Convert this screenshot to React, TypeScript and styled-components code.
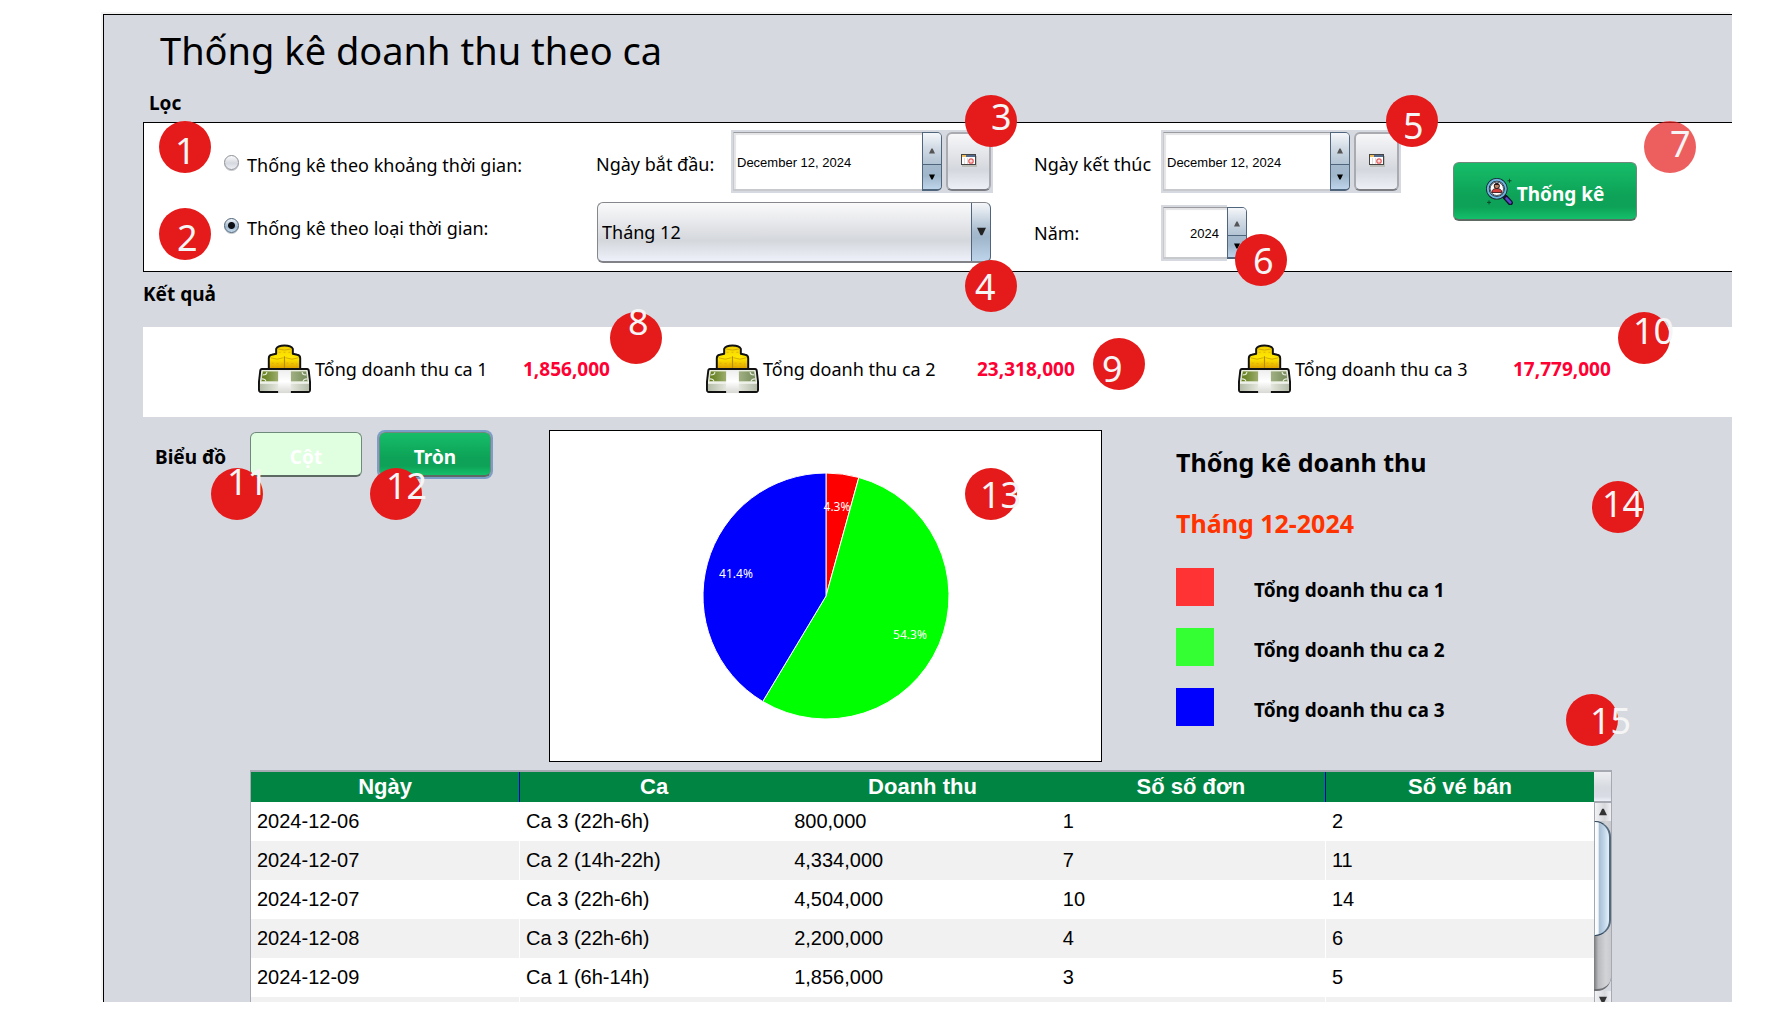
import React, { useState } from "react";
import styled, { createGlobalStyle, css } from "styled-components";

const UI_FONT = `"Noto Sans", "Open Sans", sans-serif`;
const DATA_FONT = `"Liberation Sans", Arial, sans-serif`;
const SURFACE = "#d6d9e0";

const GlobalStyle = createGlobalStyle`
  *, *::before, *::after { box-sizing: border-box; }
  body { margin: 0; background: #fff; color: #000; font: 18px/24px ${UI_FONT}; }
  button, input, select { font: inherit; color: inherit; margin: 0; }
`;

const Page = styled.div`
  position: relative;
  height: 100vh;
  overflow: hidden;
  padding: 14px 35px 26px 103px;
`;

const Frame = styled.main`
  height: 100%;
  display: flex;
  flex-direction: column;
  overflow: hidden;
  padding: 9px 0 0 39px;
  background: ${SURFACE};
  border: solid #000;
  border-width: 1px 0 0 1px;
  box-shadow: -2px -2px 0 #f3f3f3;
`;

const Title = styled.h1`
  margin: 0 0 15px 17px;
  font-size: 38px;
  line-height: 52px;
  font-weight: 400;
`;

const SectionTitle = styled.h2<{ $indent?: number; $after: number }>`
  margin: 0 0 ${(p) => p.$after}px ${(p) => p.$indent ?? 0}px;
  font-size: 19px;
  line-height: 24px;
  font-weight: 700;
`;

/* ---------- filter ---------- */

const FilterPanel = styled.form`
  flex: none;
  display: grid;
  grid-template-columns: 372px 135px 262px 41px 127px 240px 1fr;
  grid-template-rows: 63px 61px;
  row-gap: 9px;
  align-items: center;
  padding: 7px 0 8px 80px;
  margin-bottom: 10px;
  background: #fff;
  border: solid #000;
  border-width: 1px 0 1px 1px;
`;

const RadioGroup = styled.div`
  grid-area: 1 / 1 / 3 / 2;
  align-self: start;
  display: flex;
  flex-direction: column;
  gap: 39px;
  padding-top: 23px;
`;

const RadioLabel = styled.label`
  display: flex;
  gap: 8px;
  white-space: nowrap;
`;

const Radio = styled.input`
  appearance: none;
  flex: none;
  width: 15px;
  height: 15px;
  margin-top: 2px;
  border: 1px solid #8d9096;
  border-radius: 50%;
  background: linear-gradient(#fbfbfc, #d5d8de 55%, #eef0f6);
  box-shadow: 0 1px 0 #c4c6ca;

  &:checked {
    border-color: #4d6277;
    background:
      radial-gradient(circle, #0c0f14 0 3px, transparent 4px),
      linear-gradient(#eef3f8, #a0b6cb 60%, #c4daec);
  }
`;

const FieldLabel = styled.label<{ $row: number; $col: number }>`
  grid-row: ${(p) => p.$row};
  grid-column: ${(p) => p.$col};
  padding-top: ${(p) => (p.$row === 1 ? 4 : 0)}px;
  white-space: nowrap;
`;

const FieldFrame = styled.div<{ $row: number; $col: number; $width?: number }>`
  grid-row: ${(p) => p.$row};
  grid-column: ${(p) => p.$col};
  display: flex;
  width: ${(p) => (p.$width ? `${p.$width}px` : "auto")};
  height: ${(p) => (p.$width ? 56 : 63)}px;
  padding: 2px;
  background: ${(p) =>
    p.$width ? `linear-gradient(90deg, ${SURFACE} 66px, #fff 66px)` : SURFACE};
`;

const TextField = styled.input<{ $right?: boolean }>`
  flex: 1;
  min-width: 0;
  padding: 4px ${(p) => (p.$right ? 8 : 3)}px 0 3px;
  border: 1px solid #c8c9cc;
  border-top: 1px solid #9a9b9e;
  border-right: 0;
  border-bottom-width: 2px;
  border-radius: 0;
  background: #fff;
  box-shadow: inset 2px 2px 1px #e4e4e6;
  font: 13px/16px ${DATA_FONT};
  text-align: ${(p) => (p.$right ? "right" : "left")};
  outline: none;
`;

const Stepper = styled.div`
  width: 20px;
  display: flex;
  flex-direction: column;
  border: 1px solid #4f657c;
  border-bottom-width: 2px;
  border-radius: 0 5px 5px 0;
  overflow: hidden;
`;

const StepButton = styled.button<{ $down?: boolean }>`
  flex: 1;
  display: grid;
  place-items: center;
  padding: 0;
  border: 0;
  ${(p) =>
    p.$down
      ? css`
          border-top: 1px solid #4f657c;
          background: linear-gradient(#a6bacd, #a0b6cb 45%, #bed4ea);
        `
      : css`
          padding-top: 6px;
          background: linear-gradient(#f5f7fa, #d3dce6 45%, #b3c4d4);
        `}
`;

const CalendarButton = styled.button`
  width: 45px;
  margin-left: 4px;
  padding: 0 0 2px;
  display: grid;
  place-items: center;
  border: 2px solid #a9abb0;
  border-bottom-color: #7b7d82;
  border-radius: 6px;
  background: linear-gradient(#f7f7f9, #d4d7dd 65%, #eef0f8);
`;

const SelectFrame = styled.div`
  grid-row: 2;
  grid-column: 2 / 4;
  height: 61px;
  margin: 0 2px 0 1px;
  display: flex;
  position: relative;

  svg {
    position: absolute;
    right: 5px;
    top: 25px;
    pointer-events: none;
  }
`;

const Select = styled.select`
  appearance: none;
  flex: 1;
  padding: 0 24px 0 4px;
  border: 1px solid #85878c;
  border-bottom: 2px solid #808288;
  border-right-color: #4f657c;
  border-radius: 6px;
  background:
    linear-gradient(#4f657c, #4f657c) right 18px top / 1px 100% no-repeat,
    linear-gradient(#f5f7fa, #a6bacd 50%, #a0b6cb 60%, #bed4ea) right / 18px 100% no-repeat,
    linear-gradient(#fafafb, #d4d7dc 65%, #eff1fa);
`;

const Action = styled.button<{ $variant: "solid" | "pale"; $focus?: boolean; $large?: boolean }>`
  display: flex;
  align-items: center;
  justify-content: center;
  gap: 4px;
  width: ${(p) => (p.$large ? 184 : 112)}px;
  height: ${(p) => (p.$large ? 59 : 45)}px;
  padding: 5px 0 0;
  border: 1px solid #6f8a7a;
  border-bottom: 2px solid #5d6a64;
  border-radius: 6px;
  color: #fff;
  font-size: 19px;
  font-weight: 700;
  background: ${(p) =>
    p.$variant === "solid"
      ? "linear-gradient(#16bd69, #0da257 60%, #0da257 78%, #14bf6a)"
      : "#e0ffe0"};
  box-shadow: ${(p) => (p.$focus ? "0 0 0 2px #7b9dc8" : "none")};

  svg {
    margin-bottom: 5px;
  }
`;

const SubmitCell = styled.div`
  grid-area: 1 / 7 / 3 / 8;
  align-self: start;
  padding: 32px 0 0 52px;
`;

/* ---------- totals ---------- */

const Totals = styled.section`
  flex: none;
  display: grid;
  grid-template-columns: 448fr 532fr 494fr;
  align-items: center;
  height: 90px;
  padding: 0 0 6px 115px;
  margin-bottom: 13px;
  background: #fff;
`;

const Total = styled.div`
  display: flex;
  align-items: center;
  gap: 4px;
  white-space: nowrap;
`;

const TotalLabel = styled.span<{ $width: number }>`
  width: ${(p) => p.$width}px;
`;

const TotalValue = styled.strong`
  font-size: 19px;
  color: #ff0033;
`;

/* ---------- chart ---------- */

const ChartRow = styled.section`
  flex: none;
  display: grid;
  grid-template-columns: 406px 553px 1fr;
  height: 332px;
  margin-bottom: 8px;
`;

const ChartControls = styled.div`
  display: flex;
  align-items: center;
  align-self: start;
  gap: 17px;
  padding: 2px 0 0 12px;
`;

const ControlsTitle = styled.span`
  width: 78px;
  padding-top: 4px;
  font-size: 19px;
  font-weight: 700;
  white-space: nowrap;
`;

const ChartBox = styled.div`
  border: 1px solid #000;
  background: #fff;
  display: grid;
  place-items: center;

  text {
    font: 12px "Noto Sans", sans-serif;
    fill: #fff;
    text-anchor: middle;
  }
`;

const Legend = styled.div`
  padding: 16px 0 0 74px;
`;

const LegendTitle = styled.p<{ $accent?: boolean }>`
  margin: 0 0 29px;
  font-size: 25px;
  line-height: 32px;
  font-weight: 700;
  color: ${(p) => (p.$accent ? "#ff3300" : "#000")};
`;

const LegendList = styled.ul`
  list-style: none;
  margin: 0;
  padding: 0;
  display: grid;
  gap: 22px;
`;

const LegendItem = styled.li`
  display: flex;
  align-items: center;
  gap: 40px;
  font-size: 19px;
  font-weight: 700;
`;

const LegendText = styled.span`
  padding-top: 5px;
`;

const Swatch = styled.span<{ $color: string }>`
  width: 38px;
  height: 38px;
  background: ${(p) => p.$color};
`;

/* ---------- table ---------- */

const TableArea = styled.section`
  flex: 1;
  min-height: 0;
  display: flex;
  overflow: hidden;
  margin: 0 120px 0 107px;
  border: solid #a6a9b2;
  border-width: 2px 1px 0 1px;
`;

const TableViewport = styled.div`
  flex: 1;
  min-width: 0;
  overflow: hidden;
`;

const Table = styled.table`
  width: 100%;
  table-layout: fixed;
  border-collapse: collapse;
  font: 20px/24px ${DATA_FONT};
  background: #fff;

  th {
    height: 30px;
    padding: 0;
    background: #008442;
    color: #fff;
    font-size: 22px;
  }
  th:nth-child(1), th:nth-child(4) { border-right: 1px solid #0000cc; }
  td {
    height: 39px;
    padding: 0 6px 2px;
  }
  td:nth-child(1), td:nth-child(4) { border-right: 1px solid #fff; }
  tbody tr:nth-child(even) { background: #f1f1f1; }
`;

const ScrollColumn = styled.div`
  width: 17px;
  flex: none;
  display: flex;
  flex-direction: column;
`;

const ScrollCorner = styled.div`
  height: 31px;
  flex: none;
  border-bottom: 2px solid #a6a9b2;
  background: linear-gradient(#eceef1, #d6d9df 55%, #d9dce5 85%, #eef0f8);
`;

const ScrollEnd = styled.div`
  flex: none;
  height: 18px;
  display: grid;
  place-items: center;
  border-left: 1px solid #a6a9b2;
  background: linear-gradient(90deg, #f2f2f4, #d6d8dc 60%, #eef0f4);
`;

const Track = styled.div`
  flex: none;
  height: 170px;
  background: linear-gradient(90deg, #77797d, #b9babe 25%, #d2d3d7 70%, #c9cace);
  border-bottom: 2px solid #6c6e72;
  border-radius: 0 0 14px 0;
`;

const Thumb = styled.div`
  height: 115px;
  border: 1px solid #2f465c;
  border-left-color: #a0aab4;
  border-right: 2px solid #55697d;
  border-radius: 0 16px 16px 0;
  background: linear-gradient(90deg, #fff, #f3f8fb 22%, #a9c0d5 32%, #c0d5e8 65%, #e3f2fb);
`;

/* ---------- numbered markers ---------- */

const Marker = styled.div<{ $x: number; $y: number; $faded?: boolean }>`
  position: absolute;
  left: ${(p) => p.$x}px;
  top: ${(p) => p.$y}px;
  width: 52px;
  height: 52px;
  border-radius: 50%;
  background: ${(p) => (p.$faded ? "rgba(229, 27, 27, 0.7)" : "#e51b1b")};
  pointer-events: none;
`;

const MarkerText = styled.span<{ $x: number; $y: number }>`
  position: absolute;
  left: ${(p) => p.$x}px;
  top: ${(p) => p.$y}px;
  font-size: 36px;
  line-height: 36px;
  color: #f5f5f5;
`;

/* n, circle left/top, digits left/top inside the circle */
const markers: number[][] = [
  [1, 159, 121, 16, 12],
  [2, 159, 208, 18, 12],
  [3, 965, 95, 26, 4],
  [4, 965, 260, 10, 9],
  [5, 1386, 95, 17, 13],
  [6, 1235, 234, 18, 9],
  [7, 1644, 121, 26, 5],
  [8, 610, 312, 18, -8],
  [9, 1093, 338, 9, 13],
  [10, 1618, 312, 15, 1],
  [11, 211, 468, 16, -4],
  [12, 370, 468, 16, 0],
  [13, 965, 468, 15, 9],
  [14, 1592, 481, 10, 5],
  [15, 1566, 694, 24, 9],
];

/* ---------- drawings ---------- */

const Triangle = ({ down, size = 6, color = "#000" }: { down?: boolean; size?: number; color?: string }) => (
  <svg width={size} height={size} viewBox="0 0 6 6" aria-hidden="true">
    <path d={down ? "M0 0.5H6L3.6 5.5H2.4Z" : "M0 5.5H6L3.6 0.5H2.4Z"} fill={color} />
  </svg>
);

const CalendarIcon = () => (
  <svg width="16" height="13" viewBox="0 0 16 13" aria-hidden="true">
    <rect x="1" y="2" width="15" height="11" fill="#bdbfb9" />
    <rect x="0.5" y="0.5" width="14" height="10" fill="#fff" stroke="#444" />
    <rect x="1" y="1" width="13" height="2" fill="#536b8c" />
    <rect x="1" y="1" width="4" height="2" fill="#f0c060" />
    <path d="M3.5 4V10M6.5 4V10" stroke="#ddd" />
    <circle cx="10" cy="7" r="2.2" fill="#fff" stroke="#e65a5a" strokeWidth="1.3" />
    <circle cx="10" cy="7" r="0.6" fill="#e65a5a" />
  </svg>
);

const SearchIcon = () => (
  <svg width="27" height="27" viewBox="0 0 27 27" aria-hidden="true">
    <path d="M17.5 17.5L20.5 20.5" stroke="#111" strokeWidth="4.5" />
    <path d="M17.5 17.5L20.5 20.5" stroke="#e9e9f4" strokeWidth="2" />
    <path d="M19.8 19.8L24.3 24.8" stroke="#14122c" strokeWidth="5.2" strokeLinecap="round" />
    <path d="M20.6 20.6L24.2 24.4" stroke="#5948c7" strokeWidth="2.8" strokeLinecap="round" />
    <circle cx="10.8" cy="10.8" r="9" fill="#fff" stroke="#172433" strokeWidth="3.6" />
    <circle cx="10.8" cy="10.8" r="9" fill="none" stroke="#6eb5df" strokeWidth="2" />
    <circle cx="10.8" cy="10.8" r="6.7" fill="none" stroke="#172433" strokeWidth="0.8" />
    <path d="M5.8 14.5C5.8 11.5 8 10.5 10.8 10.5S15.8 11.5 15.8 14.5Z" fill="#d8433f" stroke="#40191b" strokeWidth="0.9" />
    <circle cx="10.8" cy="8" r="2.6" fill="#b98562" stroke="#2a1718" strokeWidth="1" />
    <path d="M8.4 7C9 4.8 12.6 4.8 13.2 7Z" fill="#2a1718" />
    <path d="M23.5 0.8V4.8M21.5 2.8H25.5M3 22.4V26.4M1 24.4H5" stroke="#0b4a2b" strokeWidth="1" />
  </svg>
);

const MoneyIcon = () => (
  <svg width="53" height="50" viewBox="0 0 54 50" aria-hidden="true">
    <defs>
      <linearGradient id="coin" x1="0" y1="0" x2="0" y2="1">
        <stop offset="0" stopColor="#f2cf00" />
        <stop offset="0.5" stopColor="#ffe900" />
        <stop offset="1" stopColor="#d88f00" />
      </linearGradient>
      <linearGradient id="note" x1="0" x2="1">
        <stop offset="0" stopColor="#5e7a12" />
        <stop offset="0.5" stopColor="#b3bf92" />
        <stop offset="1" stopColor="#73895a" />
      </linearGradient>
      <linearGradient id="edge" x1="0" x2="1">
        <stop offset="0" stopColor="#b5bda8" />
        <stop offset="0.5" stopColor="#f2f4ee" />
        <stop offset="1" stopColor="#b5bda8" />
      </linearGradient>
      <linearGradient id="band" x1="0" y1="0" x2="0" y2="1">
        <stop offset="0" stopColor="#eee" />
        <stop offset="0.5" stopColor="#fff" />
        <stop offset="1" stopColor="#d8d8d4" />
      </linearGradient>
    </defs>
    <path
      d="M11 27V14Q11 11 14 10.500L18.500 9.500V4.500Q20 1 27 1T35.500 4.500V9.500L40 10.500Q43 11 43 14V27Z"
      fill="url(#coin)"
      stroke="#111"
      strokeWidth="2"
      strokeLinejoin="round"
    />
    <path d="M20 4.500Q27 7 34 4.500M12.500 13.500Q19.500 16.500 26 13.500M28 13.500Q34.500 16.500 41.500 13.500" stroke="#c79b00" fill="none" strokeWidth="0.800" />
    <path d="M27 12V25" stroke="#b98d00" strokeWidth="1.200" />
    <path
      d="M14 19L25 20M29 19L40 20M14 22.500L25 23M29 23L40 22.500M21 8H33"
      stroke="#dba800"
      strokeDasharray="2 3"
      strokeWidth="0.800"
    />
    <path d="M4 25H50Q51.500 25 51.700 27L53 38V46Q53 48.500 51 48.500H3Q1 48.500 1 46V38L2.300 27Q2.500 25 4 25Z" fill="#f4f6f0" stroke="#111" strokeWidth="2" strokeLinejoin="round" />
    <path d="M4.500 27H49.500L51 38H3Z" fill="url(#note)" stroke="#dfe5d2" />
    <path d="M5 31Q9 31 9 28M49 31Q45 31 45 28M4 35Q8 35 8 38M50 35Q46 35 46 38" stroke="#e5ead9" fill="none" strokeWidth="1.200" />
    <path d="M2 40H52V47.500H2Z" fill="url(#edge)" />
    <path d="M20.500 26H33.500V49.500H20.500Z" fill="url(#band)" />
  </svg>
);

const CX = 123;
const CY = 123;
const R = 123;

const slices = [
  { share: 4.3, color: "#ff0000", x: 134, y: 38 },
  { share: 54.3, color: "#00ff00", x: 207, y: 166 },
  { share: 41.4, color: "#0000ff", x: 33, y: 105 },
];

function PieChart() {
  const at = (percent: number) => {
    const a = (percent / 100) * Math.PI * 2;
    return `${CX + R * Math.sin(a)} ${CY - R * Math.cos(a)}`;
  };
  let start = 0;
  return (
    <svg width="246" height="246" viewBox="0 0 246 246" role="img" aria-label="Thống kê doanh thu">
      {slices.map((s) => {
        const from = start;
        start += s.share;
        return (
          <path
            key={s.color}
            d={`M${CX} ${CY}L${at(from)}A${R} ${R} 0 ${s.share > 50 ? 1 : 0} 1 ${at(start)}Z`}
            fill={s.color}
            stroke="#fff"
            strokeWidth="1"
          />
        );
      })}
      {slices.map((s) => (
        <text key={s.color} x={s.x} y={s.y}>
          {s.share}%
        </text>
      ))}
    </svg>
  );
}

/* ---------- data ---------- */

const totals = [
  { label: "Tổng doanh thu ca 1", value: "1,856,000", width: 204 },
  { label: "Tổng doanh thu ca 2", value: "23,318,000", width: 210 },
  { label: "Tổng doanh thu ca 3", value: "17,779,000", width: 214 },
];

const legend = [
  ["#ff3333", "Tổng doanh thu ca 1"],
  ["#33ff33", "Tổng doanh thu ca 2"],
  ["#0000ff", "Tổng doanh thu ca 3"],
];

const columns = ["Ngày", "Ca", "Doanh thu", "Số số đơn", "Số vé bán"];
const rows = [
  ["2024-12-06", "Ca 3 (22h-6h)", "800,000", "1", "2"],
  ["2024-12-07", "Ca 2 (14h-22h)", "4,334,000", "7", "11"],
  ["2024-12-07", "Ca 3 (22h-6h)", "4,504,000", "10", "14"],
  ["2024-12-08", "Ca 3 (22h-6h)", "2,200,000", "4", "6"],
  ["2024-12-09", "Ca 1 (6h-14h)", "1,856,000", "3", "5"],
  ["", "", "", "", ""],
];

const Steps = () => (
  <Stepper>
    <StepButton type="button" aria-label="Tăng">
      <Triangle color="#555" />
    </StepButton>
    <StepButton type="button" aria-label="Giảm" $down>
      <Triangle down />
    </StepButton>
  </Stepper>
);

function DateField({ id, col }: { id: string; col: number }) {
  return (
    <FieldFrame $row={1} $col={col}>
      <TextField id={id} defaultValue="December 12, 2024" />
      <Steps />
      <CalendarButton type="button" aria-label="Chọn ngày">
        <CalendarIcon />
      </CalendarButton>
    </FieldFrame>
  );
}

export default function App() {
  const [mode, setMode] = useState("type");
  return (
    <Page>
      <GlobalStyle />
      <Frame>
        <Title>Thống kê doanh thu theo ca</Title>

        <SectionTitle $indent={6} $after={7}>Lọc</SectionTitle>
        <FilterPanel onSubmit={(e) => e.preventDefault()}>
          <RadioGroup role="radiogroup">
            <RadioLabel>
              <Radio type="radio" name="mode" checked={mode === "range"} onChange={() => setMode("range")} />
              Thống kê theo khoảng thời gian:
            </RadioLabel>
            <RadioLabel>
              <Radio type="radio" name="mode" checked={mode === "type"} onChange={() => setMode("type")} />
              Thống kê theo loại thời gian:
            </RadioLabel>
          </RadioGroup>
          <FieldLabel htmlFor="from" $row={1} $col={2}>Ngày bắt đầu:</FieldLabel>
          <DateField id="from" col={3} />
          <FieldLabel htmlFor="to" $row={1} $col={5}>Ngày kết thúc</FieldLabel>
          <DateField id="to" col={6} />
          <SelectFrame>
            <Select aria-label="Tháng" defaultValue="12">
              <option value="12">Tháng 12</option>
            </Select>
            <Triangle down size={9} color="#222" />
          </SelectFrame>
          <FieldLabel htmlFor="year" $row={2} $col={5}>Năm:</FieldLabel>
          <FieldFrame $row={2} $col={6} $width={88}>
            <TextField id="year" defaultValue="2024" $right />
            <Steps />
          </FieldFrame>
          <SubmitCell>
            <Action type="submit" $variant="solid" $large>
              <SearchIcon />
              Thống kê
            </Action>
          </SubmitCell>
        </FilterPanel>

        <SectionTitle $after={21}>Kết quả</SectionTitle>
        <Totals>
          {totals.map((t) => (
            <Total key={t.label}>
              <MoneyIcon />
              <TotalLabel $width={t.width}>{t.label}</TotalLabel>
              <TotalValue>{t.value}</TotalValue>
            </Total>
          ))}
        </Totals>

        <ChartRow>
          <ChartControls>
            <ControlsTitle>Biểu đồ</ControlsTitle>
            <Action type="button" $variant="pale">Cột</Action>
            <Action type="button" $variant="solid" $focus>Tròn</Action>
          </ChartControls>
          <ChartBox>
            <PieChart />
          </ChartBox>
          <Legend>
            <LegendTitle>Thống kê doanh thu</LegendTitle>
            <LegendTitle $accent>Tháng 12-2024</LegendTitle>
            <LegendList>
              {legend.map(([color, label]) => (
                <LegendItem key={label}>
                  <Swatch $color={color} />
                  <LegendText>{label}</LegendText>
                </LegendItem>
              ))}
            </LegendList>
          </Legend>
        </ChartRow>

        <TableArea>
          <TableViewport>
            <Table>
              <thead>
                <tr>
                  {columns.map((c) => (
                    <th key={c}>{c}</th>
                  ))}
                </tr>
              </thead>
              <tbody>
                {rows.map((r, i) => (
                  <tr key={i}>
                    {r.map((c, j) => (
                      <td key={j}>{c}</td>
                    ))}
                  </tr>
                ))}
              </tbody>
            </Table>
          </TableViewport>
          <ScrollColumn>
            <ScrollCorner />
            <ScrollEnd>
              <Triangle size={8} color="#333" />
            </ScrollEnd>
            <Track>
              <Thumb />
            </Track>
            <ScrollEnd>
              <Triangle down size={8} color="#333" />
            </ScrollEnd>
          </ScrollColumn>
        </TableArea>
      </Frame>

      {markers.map(([n, x, y, dx, dy]) => (
        <Marker key={n} $x={x} $y={y} $faded={n === 7}>
          <MarkerText $x={dx} $y={dy}>{n}</MarkerText>
        </Marker>
      ))}
    </Page>
  );
}
